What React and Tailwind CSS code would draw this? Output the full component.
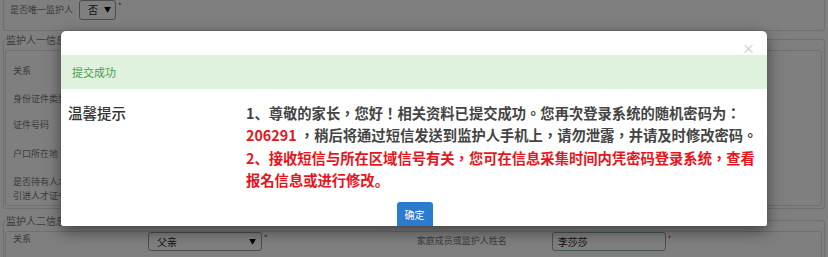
import React from "react";

const font = { fontFamily: '"Noto Sans CJK SC", "Noto Sans", sans-serif' };
const tcFont = { fontFamily: '"Noto Sans CJK TC", "Noto Sans CJK SC", sans-serif' };

function Legend({ children }) {
  return (
    <div className="relative -mt-[7px] ml-[2px] w-fit bg-white pr-[1px] text-[10px] leading-[14px] text-[#777]">
      {children}
    </div>
  );
}

function Caret() {
  return <span className="text-[7px] leading-none text-black">▼</span>;
}

function BackgroundForm() {
  return (
    <div className="px-[3px] text-[9px] text-[#777]">
      {/* 是否唯一监护人 */}
      <div className="-mt-[1px] h-[32px] rounded-b-[3px] border border-t-0 border-[#dedede] pl-[6px]">
        <div className="flex h-[21px] items-center">
          <span className="w-[69px] text-[9px] leading-[12px]">是否唯一监护人</span>
          <div className="flex h-[20px] w-[37px] items-center justify-between rounded-[3px] border border-[#999] pl-[8px] pr-[4px] text-[10px] text-[#222]">
            <span>否</span>
            <Caret />
          </div>
          <span className="ml-[2px] self-start pt-[3px] text-[8px] leading-none text-[#e00]">*</span>
        </div>
      </div>

      {/* 监护人一信息 */}
      <div className="mt-[8px] h-[170px] rounded-[3px] border border-[#dedede]">
        <Legend>监护人一信息</Legend>
        <div className="ml-[1px] mr-[2px] mt-[3px] h-[156px] rounded-[3px] border border-[#dedede] pl-[7px]">
          <div className="mt-[14px] leading-[12px]">关系</div>
          <div className="mt-[16px] leading-[12px]">身份证件类型</div>
          <div className="mt-[14px] leading-[12px]">证件号码</div>
          <div className="mt-[17px] leading-[12px]">户口所在地</div>
          <div className="mt-[15px] leading-[14px]">
            是否持有人才
            <br />
            引进人才证书
          </div>
        </div>
      </div>

      {/* 监护人二信息 */}
      <div className="mt-[11px] h-[60px] rounded-[3px] border border-[#dedede]">
        <Legend>监护人二信息</Legend>
        <div className="ml-[1px] mr-[2px] mt-[3px] h-[60px] rounded-[3px] border border-[#dedede] pl-[7px]">
          <div className="flex items-start">
            <div className="w-[135px] pt-[1px] leading-[12px]">关系</div>
            <div className="flex h-[19px] w-[114px] items-center justify-between rounded-[3px] border border-[#99a] pl-[8px] pr-[5px] text-[10px] text-[#222]">
              <span>父亲</span>
              <Caret />
            </div>
            <span className="ml-[2px] pt-[2px] text-[8px] leading-none text-[#e00]">*</span>
            <div className="ml-[149px] w-[135px] pt-[3px] leading-[12px]">家庭成员或监护人姓名</div>
            <div className="flex h-[19px] w-[114px] items-center rounded-[3px] border border-[#8aa] pl-[5px] text-[10px] text-[#222]">
              李莎莎
            </div>
            <span className="ml-[2px] pt-[3px] text-[8px] leading-none text-[#e00]">*</span>
          </div>
        </div>
      </div>
    </div>
  );
}

function Modal() {
  return (
    <div className="absolute left-[61px] top-[31px] h-[195px] w-[706px] overflow-hidden rounded-t-[5px] rounded-b-[2px] bg-white shadow-[0_5px_15px_rgba(0,0,0,0.5)]">
      <div className="relative h-[24px]">
        <span className="absolute right-[12px] top-[11px] text-[13px] leading-[12px] text-[#c4c4c4]">×</span>
      </div>
      <div className="flex h-[34px] items-center bg-[#def2de] pl-[11px] text-[11px] text-[#4a9b4a]">
        提交成功
      </div>
      <div className="flex pl-[7px] pt-[13px]">
        <div className="w-[178px] text-[14.5px] font-medium leading-[22px] text-[#333]">温馨提示</div>
        <div className="whitespace-nowrap text-[14.3px] font-bold leading-[22.4px] text-[#444]" style={tcFont}>
          <div>
            <span style={font}>1、</span>尊敬的家长，您好！相关资料已提交成功。您再次登录系统的随机密码为：
          </div>
          <div>
            <span className="text-[#e8141b]">206291</span> ，稍后将通过短信发送到监护人手机上，请勿泄露，并请及时修改密码。
          </div>
          <div className="text-[#e8141b]">
            <span style={font}>2、</span>接收短信与所在区域信号有关，您可在信息采集时间内凭密码登录系统，查看
          </div>
          <div className="text-[#e8141b]">
            报名信息或进行修改<span style={font}>。</span>
          </div>
        </div>
      </div>
      <div className="flex justify-center pl-[1px] pt-[10px]">
        <button className="h-[26px] w-[36px] rounded-[3px] bg-[#2d7bcc] text-[10px] text-white">确定</button>
      </div>
    </div>
  );
}

export default function App() {
  return (
    <div className="relative h-[257px] w-[828px] overflow-hidden bg-white" style={font}>
      <BackgroundForm />
      <div className="absolute inset-0 bg-black/50" />
      <Modal />
    </div>
  );
}
